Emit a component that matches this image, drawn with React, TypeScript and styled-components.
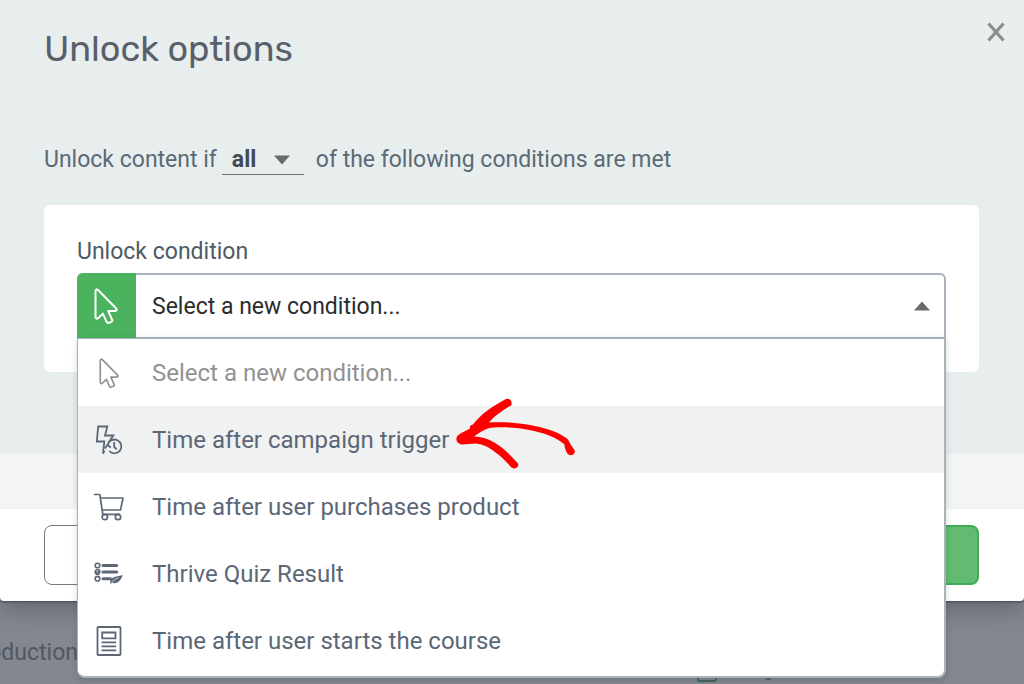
import React from "react";
import styled, { createGlobalStyle, css } from "styled-components";

const GlobalStyle = createGlobalStyle`
  *, *::before, *::after { box-sizing: border-box; }
  body {
    margin: 0;
    background: #83878f;
    font-family: Roboto, "Liberation Sans", sans-serif;
    color: #5b6a76;
  }
`;

const Page = styled.div`
  min-height: 100vh;
  overflow: hidden;
  display: flex;
  flex-direction: column;
`;

const Dialog = styled.main`
  position: relative;
  z-index: 1;
  background: #ffffff;
  border-radius: 0 0 4px 4px;
  box-shadow: 0 4px 28px rgba(50, 54, 62, 0.5), 0 1px 2px rgba(40, 44, 52, 0.6);
`;

const Body = styled.div`
  background: #e8eeed;
  padding: 24px 45px 82px 44px;
`;

const Header = styled.header`
  display: flex;
  justify-content: space-between;
  align-items: flex-start;
`;

const Title = styled.h1`
  margin: 0;
  font-family: Rubik, Roboto, "Liberation Sans", sans-serif;
  font-size: 36px;
  line-height: 50px;
  font-weight: 400;
  color: #5a5f6c;
`;

const CloseButton = styled.button`
  display: flex;
  margin: -2px -26px 0 0;
  padding: 0;
  border: 0;
  background: none;
  cursor: pointer;
`;

const MatchRow = styled.div`
  display: flex;
  align-items: center;
  margin-top: 70px;
  font-size: 23px;
  line-height: 32px;
  white-space: nowrap;
`;

const MatchSelectWrap = styled.span`
  display: flex;
  align-items: center;
  width: 82px;
  height: 30px;
  margin: 0 12px 0 5px;
  padding-right: 14px;
  border-bottom: 1px solid #75756f;
`;

const MatchSelect = styled.select`
  appearance: none;
  flex: 1;
  min-width: 0;
  padding: 0 0 0 10px;
  border: 0;
  outline: 0;
  background: transparent;
  font: inherit;
  font-weight: 700;
  color: #434956;
`;

const Card = styled.section`
  margin-top: 29px;
  padding: 33px;
  border-radius: 6px;
  background: #ffffff;
`;

const Label = styled.div`
  margin-bottom: 7px;
  font-size: 23px;
  line-height: 28px;
  color: #4e5a66;
`;

const Combo = styled.div`
  position: relative;
`;

const Trigger = styled.button`
  display: flex;
  align-items: center;
  width: 100%;
  height: 66px;
  padding: 0 16px 0 0;
  overflow: hidden;
  border: 0;
  border-radius: 6px 6px 0 0;
  background: #ffffff;
  box-shadow: inset 0 0 0 2px #a9b2be;
  font: inherit;
  font-size: 23px;
  color: #2b2c2e;
  text-align: left;
  cursor: pointer;
`;

const TriggerIcon = styled.span`
  display: flex;
  align-items: center;
  justify-content: center;
  width: 59px;
  height: 66px;
  margin-right: 16px;
  padding-right: 2px;
  background: #4bb25e;
  color: #ffffff;
`;

const TriggerText = styled.span`
  flex: 1;
`;

const Options = styled.ul`
  position: absolute;
  top: 65px;
  left: 0;
  right: 0;
  z-index: 2;
  margin: 0;
  padding: 0 0 2px;
  list-style: none;
  border: solid #a9b3be;
  border-width: 1px 2px 2px 1px;
  border-radius: 0 0 8px 8px;
  background: #ffffff;
  box-shadow: 0 2px 6px rgba(40, 48, 56, 0.2);
`;

const Option = styled.li<{ $state?: "muted" | "hover" }>`
  position: relative;
  display: flex;
  align-items: center;
  height: 67px;
  font-size: 24px;
  white-space: nowrap;
  color: #5b6776;
  cursor: pointer;
  ${({ $state }) => $state === "muted" && css`color: #929292;`}
  ${({ $state }) => $state === "hover" && css`background: #f0f2f2;`}
`;

const OptionIcon = styled.span`
  display: flex;
  justify-content: center;
  width: 62px;
  margin-right: 12px;
`;

const Pointer = styled.svg`
  position: absolute;
  left: 372px;
  top: -12px;
`;

const Strip = styled.div`
  height: 55px;
  background: #f3f5f4;
`;

const Footer = styled.footer`
  display: flex;
  justify-content: space-between;
  padding: 16px 45px 16px 44px;
`;

const FooterButton = styled.button<{ $primary?: boolean }>`
  width: 180px;
  height: 60px;
  border: ${({ $primary }) => ($primary ? "2px solid #3fac55" : "1px solid #717a87")};
  border-radius: 8px;
  background: ${({ $primary }) => ($primary ? "#62bb70" : "#ffffff")};
  cursor: pointer;
`;

const Lessons = styled.div`
  display: flex;
  justify-content: space-between;
  align-items: flex-end;
  height: 83px;
  padding: 0 240px 0 0;
`;

const LessonName = styled.div`
  display: flex;
  justify-content: flex-end;
  align-self: flex-start;
  width: 78px;
  padding-top: 36px;
  font-size: 23px;
  line-height: 32px;
  color: #525762;
`;

const Cursor = ({ w, h, stroke }: { w: number; h: number; stroke: number }) => (
  <svg width={w} height={h} viewBox="0 0 24 36" fill="none" stroke="currentColor" strokeWidth={stroke} strokeLinejoin="round" aria-hidden="true">
    <path d="M1.5 3.2C1.5 1.2 3.2.9 4.3 2.2L22 20.3C23.3 21.8 22.8 23 21 23H14.2L18 31.5C18.6 32.8 18.2 33.5 17 34L14.8 34.8C13.7 35.2 13 34.8 12.5 33.7L8.9 25.6L4.3 30C2.8 31.4 1.5 30.8 1.5 28.8Z" />
  </svg>
);

const Caret = ({ up }: { up?: boolean }) => (
  <svg width="16" height="10" viewBox="0 0 16 10" fill="#686a6b" aria-hidden="true">
    <path d={up ? "M0 9.5 8 .5 16 9.5Z" : "M0 .5H16L8 9.5Z"} />
  </svg>
);

const TriggerClock = () => (
  <svg width="28" height="30" viewBox="0 0 28 30" fill="none" stroke="currentColor" strokeWidth="1.8" aria-hidden="true">
    <path d="M9.5 26 8 28.5 9.3 16.5H1.8L3.2 1.5H12.3L10 10.5H18.3L13.3 18" />
    <path d="M12.8 19.6A6.9 6.9 0 1 1 14.3 26" />
    <path d="M9.8 23.4 12.5 19.8 15.8 22.6M19.2 17V22L21.8 24.3" />
  </svg>
);

const Cart = () => (
  <svg width="30" height="28" viewBox="0 0 30 28" fill="none" stroke="currentColor" strokeWidth="1.7" strokeLinejoin="round" aria-hidden="true">
    <path d="M0 1.5H5.8L8.8 21.3H26M6.6 5H29L26.5 17H8.2" />
    <circle cx="10.8" cy="24" r="2.7" />
    <circle cx="24" cy="24" r="2.7" />
  </svg>
);

const Quiz = () => (
  <svg width="30" height="24" viewBox="0 0 30 24" fill="none" stroke="currentColor" aria-hidden="true">
    <g strokeWidth="1.6">
      <circle cx="3.5" cy="3.5" r="2.3" />
      <circle cx="3.5" cy="10" r="2.3" />
      <circle cx="3.5" cy="16.7" r="2.3" />
      <path d="M2 9.8 3.3 11.2 6 7.8" />
    </g>
    <path d="M9 3.5H22.7M9 10H22.7M9 16.7H16.5" strokeWidth="3" strokeLinecap="round" />
    <path d="M16.2 21.5C15.7 14.7 21 15 28.8 13C26.8 19 22.5 22.6 18 20.8L16.2 22.5Z" fill="currentColor" stroke="none" />
    <path d="M17 21.5C19 18.5 21.5 16.8 24.5 15.5" stroke="#ffffff" strokeWidth=".7" />
  </svg>
);

const Sheet = () => (
  <svg width="26" height="30" viewBox="0 0 26 30" fill="none" stroke="currentColor" strokeWidth="1.8" aria-hidden="true">
    <rect x="1.5" y="1" width="23" height="28" rx=".8" />
    <path d="M6.2 6.5H19.5V12.4H6.2ZM5.5 16.3H20.2M5.5 20.3H20.2M5.5 24.3H20.2" />
  </svg>
);

const choices = [
  { text: "Select a new condition...", icon: <Cursor w={20} h={30} stroke={2} />, state: "muted" as const },
  { text: "Time after campaign trigger", icon: <TriggerClock />, state: "hover" as const },
  { text: "Time after user purchases product", icon: <Cart /> },
  { text: "Thrive Quiz Result", icon: <Quiz /> },
  { text: "Time after user starts the course", icon: <Sheet /> },
];

export default function App() {
  return (
    <Page>
      <GlobalStyle />
      <Dialog role="dialog" aria-labelledby="dialog-title">
        <Body>
          <Header>
            <Title id="dialog-title">Unlock options</Title>
            <CloseButton type="button" aria-label="Close">
              <svg width="18" height="20" viewBox="0 0 18 20" stroke="#8b8c8b" strokeWidth="3.2" aria-hidden="true">
                <path d="M1.5 1.5 16.5 18.5M16.5 1.5 1.5 18.5" />
              </svg>
            </CloseButton>
          </Header>
          <MatchRow>
            <label htmlFor="match">Unlock content if</label>
            <MatchSelectWrap>
              <MatchSelect id="match" defaultValue="all">
                <option value="all">all</option>
              </MatchSelect>
              <Caret />
            </MatchSelectWrap>
            <span>of the following conditions are met</span>
          </MatchRow>
          <Card>
            <Label id="condition-label">Unlock condition</Label>
            <Combo>
              <Trigger type="button" aria-haspopup="listbox" aria-expanded="true" aria-labelledby="condition-label condition-value">
                <TriggerIcon>
                  <Cursor w={24} h={36} stroke={2} />
                </TriggerIcon>
                <TriggerText id="condition-value">Select a new condition...</TriggerText>
                <Caret up />
              </Trigger>
              <Options role="listbox" aria-labelledby="condition-label">
                {choices.map(({ text, icon, state }) => (
                  <Option key={text} role="option" aria-selected={state === "muted"} $state={state}>
                    <OptionIcon>{icon}</OptionIcon>
                    {text}
                    {state === "hover" && (
                      <Pointer width="130" height="80" viewBox="450 394 130 80" fill="#ff0000" aria-hidden="true">
                        <path d="M505 399.5C509 396.7 513.5 402 511 405.5C504 409.5 495 415.5 489 422.5C515 420.5 555 427 568 439.5C570 444 573.5 448 575 451.5C574.5 455.5 569 456.5 567 453C565.5 450 564.5 447.5 564.5 444.5C552 432.5 520 426 494 427.5C485 428 480 432.5 474 436.5C492 436.5 506 450 518 463.5C519.5 467 514.5 470.5 511 467C501 455.5 488 444.5 476 443.5L462 444.5C456 444 454.5 437.5 459 434.5C463 432 466.5 430.5 470 428.5C469.5 426.5 470.5 425 473 424.5C481 414 492 406.5 505 399.5Z" />
                      </Pointer>
                    )}
                  </Option>
                ))}
              </Options>
            </Combo>
          </Card>
        </Body>
        <Strip />
        <Footer>
          <FooterButton type="button" aria-label="Cancel" />
          <FooterButton type="button" aria-label="Save" $primary />
        </Footer>
      </Dialog>
      <Lessons>
        <LessonName>Introduction</LessonName>
        <svg width="88" height="20" viewBox="0 0 88 20" fill="none" stroke="#3f6656" strokeWidth="2" aria-hidden="true">
          <rect x="2" y="1" width="18" height="16" rx="2" />
          <path d="M79 5 74 14Q73 16 70 15" />
        </svg>
      </Lessons>
    </Page>
  );
}
